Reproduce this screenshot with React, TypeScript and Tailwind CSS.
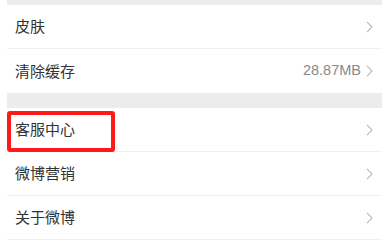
const font = { fontFamily: '"Noto Sans CJK SC", "Noto Sans", sans-serif' };

function Chevron() {
  return (
    <svg width="7" height="12" viewBox="0 0 7 12" className="shrink-0" fill="none">
      <path d="M1 0.8 L6 6 L1 11.2" stroke="#b8b8b8" strokeWidth="1.1" />
    </svg>
  );
}

function Row({ label, value, last }: { label: string; value?: string; last?: boolean }) {
  return (
    <div className={`flex h-[44px] items-center justify-between pl-[8px] pr-[9px] ${last ? "" : "border-b border-[#efefef]"}`}>
      <span className="text-[15px] text-[#333333]">{label}</span>
      <div className="flex items-center gap-[5px]">
        {value && (
          <span className="text-[14.5px] text-[#8a8a8a]" style={{ fontFamily: '"Liberation Sans", Arial, sans-serif' }}>
            {value}
          </span>
        )}
        <Chevron />
      </div>
    </div>
  );
}

export default function App() {
  return (
    <div className="relative h-[241px] w-[382px] overflow-hidden bg-white pl-[7px]" style={font}>
      <div className="h-[5px] bg-[#ececec]" />
      <div className="bg-white">
        <div className="h-[44px] border-b border-[#efefef] flex items-center justify-between pl-[8px] pr-[9px]">
          <span className="text-[15px] text-[#333333]">皮肤</span>
          <Chevron />
        </div>
        <Row label="清除缓存" value="28.87MB" last />
      </div>
      <div className="h-[15px] bg-[#ececec]" />
      <div className="relative bg-white">
        <Row label="客服中心" />
        <Row label="微博营销" />
        <Row label="关于微博" />
        <div className="pointer-events-none absolute left-0 top-[3px] h-[41px] w-[108px] rounded-[3px] border-[4px] border-[#ff1a1a]" />
      </div>
    </div>
  );
}
